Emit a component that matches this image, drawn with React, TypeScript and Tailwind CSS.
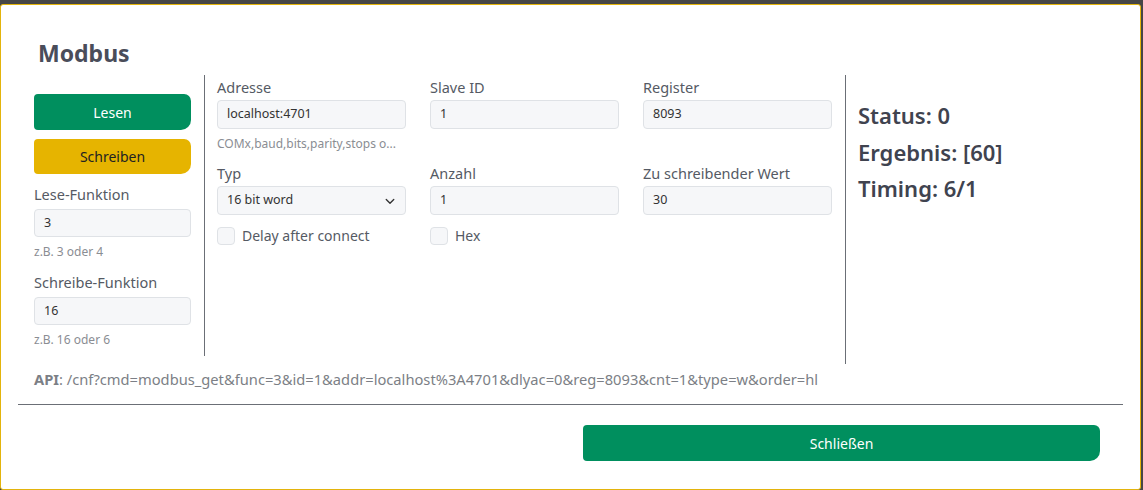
import { FC } from 'react';

const font = { fontFamily: '"Noto Sans", "Open Sans", sans-serif' };

const TextInput: FC<{ value: string; tall?: boolean }> = ({ value, tall }) => (
  <div
    className={`${tall ? 'h-[29px]' : 'h-[28px]'} w-full flex items-center px-[9px] bg-[#f6f7f9] border border-[#dfe2e6] rounded-[4px] text-[12.5px] text-[#333]`}
  >
    {value}
  </div>
);

const Field: FC<{ label: string; value: string; hint?: string; tall?: boolean }> = ({ label, value, hint, tall }) => (
  <div className="flex flex-col">
    <label className={`text-[14.5px] leading-[22px] text-[#555a64] ${tall ? 'mb-[2px]' : 'mb-[4px]'}`}>{label}</label>
    <TextInput value={value} tall={tall} />
    {hint && <span className="text-[12px] leading-[18px] text-[#8a8d93] mt-[6px]">{hint}</span>}
  </div>
);

const Check: FC<{ label: string }> = ({ label }) => (
  <div className="flex items-center gap-[7px] mt-[11px]">
    <span className="w-[18px] h-[18px] rounded-[4px] bg-[#f6f7f9] border border-[#dfe2e6]" />
    <span className="text-[14px] leading-[20px] text-[#555a64]">{label}</span>
  </div>
);

export default function App() {
  return (
    <div className="w-[1143px] h-[490px] bg-[#464646] pt-[4px] overflow-hidden" style={font}>
      <div className="h-[486px] w-[1141px] bg-white border border-[#e3b40c] rounded-[3px] flex flex-col">
        <h2 className="pl-[37px] pt-[32px] text-[23px] leading-[32px] font-bold text-[#4a4d5a]">Modbus</h2>

        <div className="flex items-start mt-[6px] pl-[33px]">
          {/* Left column: actions and function codes */}
          <div className="w-[171px] h-[281px] pr-[13px] border-r border-[#6b6f76] pt-[19px] flex flex-col">
            <button className="h-[36px] w-full bg-[#008f5e] text-white text-[14px] rounded-[4px] rounded-tr-[7px] rounded-br-[10px]">
              Lesen
            </button>
            <button className="h-[35px] mt-[9px] w-full bg-[#e6b400] text-[#222] text-[14px] rounded-[4px] rounded-tr-[7px] rounded-br-[10px]">
              Schreiben
            </button>
            <div className="mt-[9px]">
              <Field label="Lese-Funktion" value="3" hint="z.B. 3 oder 4" />
            </div>
            <div className="mt-[10px]">
              <Field label="Schreibe-Funktion" value="16" hint="z.B. 16 oder 6" />
            </div>
          </div>

          {/* Middle: connection settings */}
          <div className="w-[641px] h-[289px] pl-[12px] pr-[13px] border-r border-[#6b6f76] pt-[1px]">
            <div className="grid grid-cols-3 gap-x-[24px]">
              <Field tall label="Adresse" value="localhost:4701" hint="COMx,baud,bits,parity,stops o..." />
              <Field tall label="Slave ID" value="1" />
              <Field tall label="Register" value="8093" />
              <div className="flex flex-col mt-[9px]">
                <label className="text-[14.5px] leading-[22px] text-[#555a64] mb-[2px]">Typ</label>
                <div className="h-[29px] w-full flex items-center justify-between px-[9px] bg-[#f6f7f9] border border-[#dfe2e6] rounded-[4px] text-[12.5px] text-[#333]">
                  <span>16 bit word</span>
                  <svg width="12" height="12" viewBox="0 0 16 16" fill="none" stroke="#333" strokeWidth="1.8" strokeLinecap="round" strokeLinejoin="round">
                    <path d="M3 6l5 5 5-5" />
                  </svg>
                </div>
                <Check label="Delay after connect" />
              </div>
              <div className="flex flex-col mt-[9px]">
                <Field tall label="Anzahl" value="1" />
                <Check label="Hex" />
              </div>
              <div className="mt-[9px]">
                <Field tall label="Zu schreibender Wert" value="30" />
              </div>
            </div>
          </div>

          {/* Right: result */}
          <div className="pl-[12px] pt-[22px] flex flex-col text-[22px] leading-[36.5px] font-semibold text-[#40434f]">
            <span>Status: 0</span>
            <span>Ergebnis: [60]</span>
            <span>Timing: 6/1</span>
          </div>
        </div>

        <p className="pl-[33px] mt-[5px] text-[14.7px] leading-[20px] text-[#7c7f86]">
          <span className="font-bold">API</span>: /cnf?cmd=modbus_get&amp;func=3&amp;id=1&amp;addr=localhost%3A4701&amp;dlyac=0&amp;reg=8093&amp;cnt=1&amp;type=w&amp;order=hl
        </p>

        <div className="mx-[17px] mt-[15px] border-t border-[#6b6f76]" />

        <div className="flex justify-end pr-[40px] mt-[20px]">
          <button className="w-[517px] h-[36px] bg-[#008f5e] text-white text-[14px] rounded-[4px] rounded-tr-[6px] rounded-br-[10px]">
            Schließen
          </button>
        </div>
      </div>
    </div>
  );
}
